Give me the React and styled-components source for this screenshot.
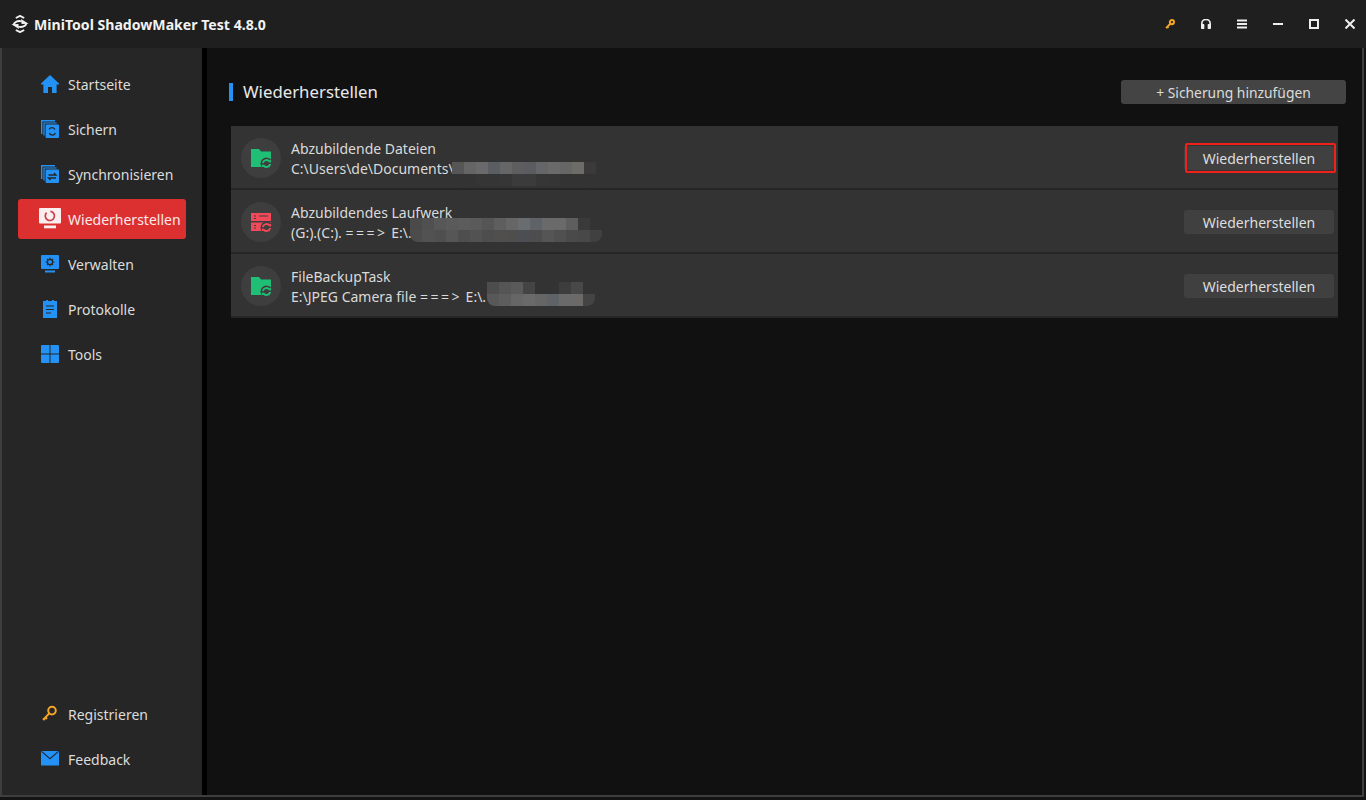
import React from "react";
import styled, { createGlobalStyle } from "styled-components";

const GlobalStyle = createGlobalStyle`
  html, body {
    margin: 0;
    padding: 0;
    height: 100%;
    background: #111;
    overflow: hidden;
  }
  * { box-sizing: border-box; }
`;

const Window = styled.div`
  width: 1366px;
  height: 800px;
  display: flex;
  flex-direction: column;
  background: #141414;
  font-family: "Noto Sans", "Open Sans", sans-serif;
  color: #e4e4e4;
  padding-bottom: 3px;
`;

const TitleBar = styled.header`
  height: 48px;
  flex: none;
  background: #1f1f1f;
  display: flex;
  align-items: center;
  padding: 0 11px 0 11px;
`;

const AppName = styled.h1`
  margin: 0 0 0 5px;
  font-size: 14.1px;
  font-weight: 700;
  color: #f2f2f2;
  flex: 1;
`;

const WinButtons = styled.div`
  display: flex;
  align-items: center;
  gap: 26px;
`;

const Body = styled.div`
  flex: 1;
  width: 1364px;
  display: flex;
  min-height: 0;
  border: 2px solid #3e3e3e;
  border-top: 0;
`;

const Sidebar = styled.nav`
  width: 200px;
  flex: none;
  background: #262626;
  padding: 16px 16px 16px;
  display: flex;
  flex-direction: column;
`;

const NavGroup = styled.div`
  display: flex;
  flex-direction: column;
  gap: 5px;
`;

const BottomGroup = styled(NavGroup)`
  margin-top: auto;
`;

const NavItem = styled.a`
  height: 40px;
  display: flex;
  align-items: center;
  gap: 9px;
  padding-left: 23px;
  border-radius: 3px;
  font-size: 14px;
  white-space: nowrap;
  color: ${(p) => (p.$active ? "#fbe9e9" : "#dcdcdc")};
  background: ${(p) => (p.$active ? "#dc3030" : "transparent")};
`;

const IconSlot = styled.span`
  width: 18px;
  height: 18px;
  flex: none;
  display: flex;
`;

const RestoreSvg = styled.svg`
  flex: none;
  margin: -2px 0 0 -2px;
`;

const Gutter = styled.div`
  width: 5px;
  flex: none;
  background: #000;
`;

const Main = styled.main`
  flex: 1;
  background: #111;
  padding: 32px 16px 0 22px;
`;

const MainHead = styled.div`
  display: flex;
  align-items: center;
  justify-content: space-between;
  height: 24px;
  margin-bottom: 22px;
`;

const Heading = styled.h2`
  margin: 0;
  font-size: 16.8px;
  font-weight: 400;
  color: #e8e8e8;
  border-left: 4px solid #2491f5;
  padding-left: 10px;
  line-height: 18px;
`;

const AddButton = styled.button`
  width: 225px;
  height: 24px;
  border: 0;
  border-radius: 3px;
  background: #444;
  color: #dcdcdc;
  font: inherit;
  font-size: 13.85px;
  padding: 0;
`;

const TaskList = styled.div`
  margin: 0 8px 0 2px;
  display: flex;
  flex-direction: column;
`;

const TaskRow = styled.div`
  height: 64px;
  background: #333;
  border-bottom: 2px solid #262626;
  display: flex;
  align-items: center;
  padding: 2px 4px 0 10px;
`;

const IconCircle = styled.div`
  width: 40px;
  height: 40px;
  border-radius: 50%;
  background: #3e3e3e;
  flex: none;
  display: flex;
  align-items: center;
  justify-content: center;
`;

const TaskText = styled.div`
  margin-left: 10px;
  padding-top: 2px;
  flex: 1;
  font-size: 14px;
  line-height: 20px;
  color: #dadada;
  position: relative;
`;

const TaskName = styled.div``;

const TaskPath = styled.div`
  white-space: nowrap;
`;

const Arrow = styled.span`
  letter-spacing: 2.5px;
`;

const Blur = styled.span`
  position: absolute;
  display: grid;
  grid-auto-flow: column;
  grid-auto-columns: 12px;
  grid-template-rows: repeat(2, 12px);
  border-radius: 0 0 8px 8px;
  overflow: hidden;
  top: ${(p) => p.$top}px;
  left: ${(p) => p.$left}px;
`;

const Cell = styled.i`
  display: block;
  background: ${(p) => p.$c};
`;

const RestoreButton = styled.button`
  width: 150px;
  height: 24px;
  border: 0;
  border-radius: 3px;
  background: #404040;
  color: #dedede;
  font: inherit;
  font-size: 14px;
  padding: 0;
  position: relative;
`;

// red marker drawn over the first button in the screenshot
const RedFrame = styled.span`
  position: absolute;
  top: -3px;
  bottom: -3px;
  left: 1px;
  right: -2px;
  border: 2px solid #f0201a;
  border-radius: 2px;
`;

const blue = "#2491f5";

const Home = () => (
  <svg width="18" height="18" viewBox="0 0 18 18">
    <path d="M9 0 L18 8.6 V9.6 H15.6 V18 H11 V12 H7 V18 H2.4 V9.6 H0 V8.6 Z" fill={blue} />
  </svg>
);

const Stack = ({ children }) => (
  <svg width="18" height="18" viewBox="0 0 18 18">
    <path d="M0 0 H14 V1.4 H1.4 V14 H0 Z" fill={blue} />
    <path d="M2.4 2.4 H15.6 V3.6 H3.6 V15.6 H2.4 Z" fill={blue} />
    <rect x="4.6" y="4.6" width="13.4" height="13.4" rx="1" fill={blue} />
    {children}
  </svg>
);

const Backup = () => (
  <Stack>
    <path d="M8.2 9.4 A3.2 3.2 0 0 1 14 9.6 M14.4 13 A3.2 3.2 0 0 1 8.4 13" fill="none" stroke="#262626" strokeWidth="1.3" />
  </Stack>
);

const Sync = () => (
  <Stack>
    <path d="M7.5 10 H15 L13 8 M15 13 H7.5 L9.5 15" fill="none" stroke="#262626" strokeWidth="1.3" />
  </Stack>
);

const Restore = () => (
  <RestoreSvg width="22" height="21" viewBox="0 0 22 21">
    <rect x="0" y="0" width="22" height="15.5" rx="1" fill="#fbeeee" />
    <rect x="5" y="17.5" width="12" height="2.8" fill="#fbeeee" />
    <path d="M7.6 4.6 A4.6 4.6 0 1 0 11.4 3.3" fill="none" stroke="#c9404c" strokeWidth="1.7" />
  </RestoreSvg>
);

const Manage = () => (
  <svg width="18" height="18" viewBox="0 0 18 18">
    <rect x="0" y="0" width="18" height="14" rx="1" fill={blue} />
    <rect x="4" y="15.5" width="10" height="2" fill={blue} />
    <circle cx="9" cy="7" r="2.6" fill="none" stroke="#262626" strokeWidth="1.3" />
    <path d="M9 2.6 V4 M9 10 V11.4 M4.6 7 H6 M12 7 H13.4 M5.9 3.9 L6.9 4.9 M11.1 9.1 L12.1 10.1 M12.1 3.9 L11.1 4.9 M6.9 9.1 L5.9 10.1" stroke="#262626" strokeWidth="1.1" />
  </svg>
);

const Logs = () => (
  <svg width="18" height="18" viewBox="0 0 18 18">
    <path d="M2 1 H5 V0 H7 V1 H11 V0 H13 V1 H16 V18 H2 Z" fill={blue} />
    <path d="M5 6 H13 M5 9.5 H13 M5 13 H10" stroke="#262626" strokeWidth="1.2" />
  </svg>
);

const Tools = () => (
  <svg width="18" height="18" viewBox="0 0 18 18" fill={blue}>
    <path d="M1 0 H8.5 V8.5 H0 V1 A1 1 0 0 1 1 0 Z" />
    <path d="M9.5 0 H17 A1 1 0 0 1 18 1 V8.5 H9.5 Z" />
    <path d="M0 9.5 H8.5 V18 H1 A1 1 0 0 1 0 17 Z" />
    <path d="M9.5 9.5 H18 V17 A1 1 0 0 1 17 18 H9.5 Z" />
  </svg>
);

const Key = () => (
  <svg width="18" height="18" viewBox="0 0 18 18">
    <circle cx="11" cy="5.6" r="3.8" fill="none" stroke="#f5a623" strokeWidth="2" />
    <path d="M8.2 8.4 L2.6 14.4 M2 13.4 L3.6 15.2 M4.4 12.4 L6 14" stroke="#f5a623" strokeWidth="2" fill="none" />
  </svg>
);

const Mail = () => (
  <svg width="18" height="18" viewBox="0 0 18 18">
    <path d="M0 1 H18 V15 A.6 .6 0 0 1 17.4 15.5 H.6 A.6 .6 0 0 1 0 15 Z" fill={blue} />
    <path d="M.5 1.4 L9 8.6 L17.5 1.4" fill="none" stroke="#1d2b38" strokeWidth="1.2" />
  </svg>
);

const Logo = () => (
  <svg width="18" height="18" viewBox="0 0 18 18" fill="none" stroke="#f2f2f2" strokeWidth="1.9">
    <path d="M4.8 3 L9 .9 L13.2 3" />
    <path d="M4.8 15 L9 17.1 L13.2 15" />
    <path d="M2.4 10 C3.2 6.8 7 5.2 10.5 6.4" />
    <path d="M15.6 8 C14.8 11.2 11 12.8 7.5 11.6" />
    <path d="M10 3.9 L17.6 8.8 L10.6 9.1 Z M8 14.1 L.4 9.2 L7.4 8.9 Z" fill="#f2f2f2" stroke="none" />
  </svg>
);

const TopKey = () => (
  <svg width="10" height="10" viewBox="0 0 12 12">
    <circle cx="8.3" cy="3.7" r="2.5" fill="none" stroke="#f5a623" strokeWidth="2.4" />
    <path d="M6.6 5.4 L1.2 11 M2.6 9 L4.2 10.6" stroke="#f5a623" strokeWidth="2.2" fill="none" />
  </svg>
);

const Headset = () => (
  <svg width="10" height="10" viewBox="0 0 12 12">
    <path d="M1 8 V5.5 A5 5 0 0 1 11 5.5 V8" fill="none" stroke="#eee" strokeWidth="2" />
    <rect x="0" y="6" width="4" height="6" rx=".8" fill="#eee" />
    <rect x="8" y="6" width="4" height="6" rx=".8" fill="#eee" />
  </svg>
);

const Menu = () => (
  <svg width="10" height="10" viewBox="0 0 10 10" fill="#eee">
    <rect x="0" y="0.5" width="10" height="2" />
    <rect x="0" y="4" width="10" height="2" />
    <rect x="0" y="7.5" width="10" height="2" />
  </svg>
);

const Minimize = () => (
  <svg width="10" height="10" viewBox="0 0 10 10" fill="#eee">
    <rect x="0" y="4" width="10" height="2" />
  </svg>
);

const Maximize = () => (
  <svg width="10" height="10" viewBox="0 0 10 10">
    <rect x="1" y="1" width="8" height="8" fill="none" stroke="#eee" strokeWidth="2" />
  </svg>
);

const Close = () => (
  <svg width="10" height="10" viewBox="0 0 10 10">
    <path d="M.5 .5 L9.5 9.5 M9.5 .5 L.5 9.5" stroke="#eee" strokeWidth="2" />
  </svg>
);

const Badge = () => (
  <g>
    <circle cx="15.5" cy="14.5" r="6" fill="#3e3e3e" />
    <path d="M11.8 14 A3.8 3.8 0 0 1 18.6 12.6 M19.2 15 A3.8 3.8 0 0 1 12.4 16.4" fill="none" stroke="currentColor" strokeWidth="1.9" />
    <path d="M17 12.6 L20 13.8 L20.2 10.8 M14 16.4 L11 15.2 L10.8 18.2" fill="currentColor" />
  </g>
);

const FolderIcon = () => (
  <svg width="21" height="19" viewBox="0 0 21 19" style={{ color: "#1fbf75" }}>
    <path d="M0 0 H8 L10 2.4 H20 V18 H0 Z" fill="currentColor" />
    <Badge />
  </svg>
);

const DriveIcon = () => (
  <svg width="21" height="19" viewBox="0 0 21 19" style={{ color: "#f04a5a" }}>
    <path d="M0 0 H20 V8 H0 Z M0 9.5 H20 V18 H0 Z" fill="currentColor" />
    <path d="M3 3 H5 M3 5.5 H5 M8 3 H17 M3 12.5 H5 M3 15 H5" stroke="#3e3e3e" strokeWidth="1.1" />
    <Badge />
  </svg>
);

const NAV = [
  { label: "Startseite", icon: <Home /> },
  { label: "Sichern", icon: <Backup /> },
  { label: "Synchronisieren", icon: <Sync /> },
  { label: "Wiederherstellen", icon: <Restore />, active: true },
  { label: "Verwalten", icon: <Manage /> },
  { label: "Protokolle", icon: <Logs /> },
  { label: "Tools", icon: <Tools /> },
];

// the mosaic that hides the end of each path, one colour per cell, column by column
const Mosaic = ({ top, left, cells }) => (
  <Blur $top={top} $left={left}>
    {cells.map((c, i) => (
      <Cell key={i} $c={c} />
    ))}
  </Blur>
);

const TASKS = [
  {
    name: "Abzubildende Dateien",
    path: <>C:\Users\de\Documents\</>,
    icon: <FolderIcon />,
    marked: true,
    blur: {
      top: 25,
      left: 161,
      cells: [
        "#565656", "#333", "#656565", "#333", "#6a6a6a", "#353535", "#5a5e62", "#353535",
        "#666", "#363636", "#5e5e5e", "#3b3b3b", "#5a5c60", "#3b3b3b", "#646668", "#363636",
        "#6a6a6a", "#353535", "#666", "#333", "#6e6c68", "#333", "#3a3a3a", "#333",
      ],
    },
  },
  {
    name: "Abzubildendes Laufwerk",
    path: <>(G:).(C:). <Arrow>===&gt;</Arrow> E:\.</>,
    icon: <DriveIcon />,
    blur: {
      top: 17,
      left: 119,
      cells: [
        "#4a4a4a", "#4c4c4c", "#505050", "#525252", "#575757", "#4f4f4f", "#5a5a5a", "#565656",
        "#5c5c5c", "#4e4e4e", "#5a5a5a", "#525252", "#555", "#4d4d4d", "#5e5e5e", "#4f4f4f",
        "#666", "#504e4c", "#6a6d70", "#4b4f53", "#5f6266", "#4d4d4d", "#6a6a6a", "#555",
        "#6c6a68", "#505050", "#5e5e5e", "#4a4a4a", "#3a3a3a", "#484848", "#333", "#404040",
      ],
    },
  },
  {
    name: "FileBackupTask",
    path: <>E:\JPEG Camera file <Arrow>===&gt;</Arrow> E:\.</>,
    icon: <FolderIcon />,
    blur: {
      top: 17,
      left: 196,
      cells: [
        "#4d4d4d", "#585858", "#555", "#5d5d5d", "#5a5a5a", "#666", "#444", "#6a6a6a",
        "#333", "#666", "#333", "#5f6266", "#3d3d3d", "#6a6a6a", "#484848", "#6c6a68",
        "#333", "#444",
      ],
    },
  },
];

export default function App() {
  return (
    <>
      <GlobalStyle />
      <Window>
        <TitleBar>
          <Logo />
          <AppName>MiniTool ShadowMaker Test 4.8.0</AppName>
          <WinButtons>
            <TopKey />
            <Headset />
            <Menu />
            <Minimize />
            <Maximize />
            <Close />
          </WinButtons>
        </TitleBar>
        <Body>
          <Sidebar>
            <NavGroup>
              {NAV.map((item) => (
                <NavItem key={item.label} $active={item.active}>
                  <IconSlot>{item.icon}</IconSlot>
                  {item.label}
                </NavItem>
              ))}
            </NavGroup>
            <BottomGroup>
              <NavItem>
                <IconSlot><Key /></IconSlot>
                Registrieren
              </NavItem>
              <NavItem>
                <IconSlot><Mail /></IconSlot>
                Feedback
              </NavItem>
            </BottomGroup>
          </Sidebar>
          <Gutter />
          <Main>
            <MainHead>
              <Heading>Wiederherstellen</Heading>
              <AddButton>+ Sicherung hinzufügen</AddButton>
            </MainHead>
            <TaskList>
              {TASKS.map((task) => (
                <TaskRow key={task.name}>
                  <IconCircle>{task.icon}</IconCircle>
                  <TaskText>
                    <TaskName>{task.name}</TaskName>
                    <TaskPath>{task.path}</TaskPath>
                    <Mosaic {...task.blur} />
                  </TaskText>
                  <RestoreButton>
                    Wiederherstellen
                    {task.marked && <RedFrame />}
                  </RestoreButton>
                </TaskRow>
              ))}
            </TaskList>
          </Main>
        </Body>
      </Window>
    </>
  );
}
